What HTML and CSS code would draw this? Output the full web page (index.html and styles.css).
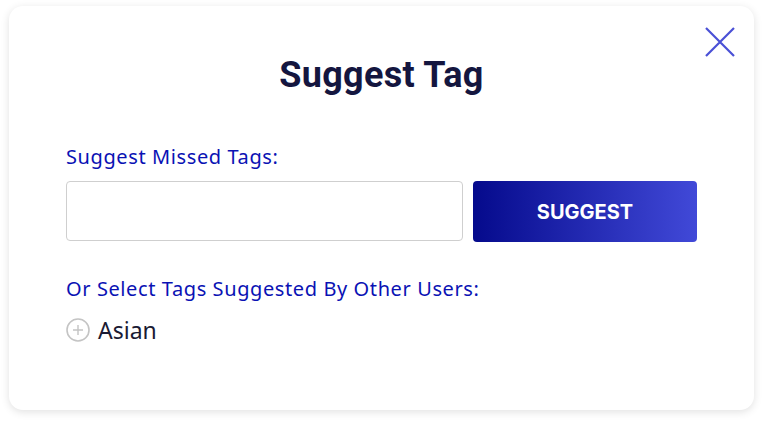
FILE: index.html
```html
<!DOCTYPE html>
<html lang="en">
<head>
  <meta charset="UTF-8">
  <meta name="viewport" content="width=device-width, initial-scale=1.0">
  <title>Suggest Tag</title>
  <link rel="stylesheet" href="styles.css">
</head>
<body>
<div class="modal">
  <button class="close-btn" aria-label="Close">
    <svg width="32" height="32" viewBox="0 0 32 32">
      <path d="M2 2 L30 30 M30 2 L2 30" stroke="#4a50d6" stroke-width="2.2" fill="none"/>
    </svg>
  </button>

  <h1 class="title">Suggest Tag</h1>

  <label class="label" for="tagInput">Suggest Missed Tags:</label>
  <div class="suggest-row">
    <input class="tag-input" id="tagInput" type="text">
    <button class="btn-suggest">SUGGEST</button>
  </div>

  <div class="label label-other">Or Select Tags Suggested By Other Users:</div>

  <div class="tag-list">
    <div class="tag-item">
      <svg class="plus-icon" width="24" height="24" viewBox="0 0 24 24">
        <circle cx="12" cy="12" r="11" stroke="#c4c4c4" stroke-width="1.6" fill="none"/>
        <path d="M12 7 V17 M7 12 H17" stroke="#c4c4c4" stroke-width="1.4"/>
      </svg>
      <span>Asian</span>
    </div>
  </div>
</div>
</body>
</html>
```

FILE: styles.css
```css
* {
  margin: 0;
  padding: 0;
  box-sizing: border-box;
}

body {
  font-family: 'Inter', 'Liberation Sans', sans-serif;
  background: #ffffff;
  padding: 6px 10px 13px 9px;
}

.modal {
  position: relative;
  background: #ffffff;
  border-radius: 14px;
  box-shadow: 0 2px 8px rgba(0, 0, 0, 0.12);
  height: 404px;
  padding: 48px 57px 0 57px;
}

.close-btn {
  position: absolute;
  top: 20px;
  right: 18px;
  background: none;
  border: none;
  cursor: pointer;
  line-height: 0;
}

.title {
  text-align: center;
  font-family: 'Roboto', sans-serif;
  font-size: 36px;
  font-weight: 700;
  color: #14163f;
  letter-spacing: 0.3px;
  margin-bottom: 47px;
}

.label {
  display: block;
  color: #0a12b4;
  font-family: 'Noto Sans', sans-serif;
  font-size: 20px;
  letter-spacing: 0.6px;
  margin-bottom: 11px;
}

.suggest-row {
  display: flex;
  gap: 10px;
  margin-bottom: 33px;
}

.tag-input {
  width: 397px;
  height: 60px;
  border: 1px solid #cfcfcf;
  border-radius: 4px;
  padding: 0 14px;
  font-size: 18px;
}

.btn-suggest {
  width: 224px;
  height: 61px;
  border: none;
  border-radius: 4px;
  background: linear-gradient(90deg, #050a8c 0%, #4149d8 100%);
  color: #ffffff;
  font-family: 'Inter', sans-serif;
  font-size: 20px;
  font-weight: 700;
  cursor: pointer;
}

.label-other {
  margin-bottom: 12px;
}

.tag-item {
  display: flex;
  align-items: center;
  gap: 8px;
  font-family: 'Noto Sans', sans-serif;
  font-size: 23px;
  color: #1a1a33;
}
```
